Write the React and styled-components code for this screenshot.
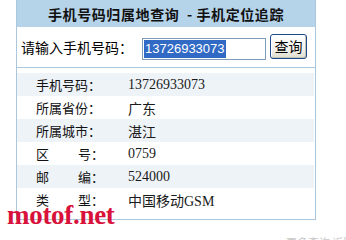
import React from 'react'
import styled, { createGlobalStyle } from 'styled-components'

const GlobalStyle = createGlobalStyle`
  html, body {
    margin: 0;
    padding: 0;
    background: #fff;
    overflow: hidden;
  }
  body {
    font-family: "Noto Sans CJK SC", "Liberation Sans", sans-serif;
    color: #000;
  }
`;

const rows = [
  { label: '手机号码：', value: '13726933073' },
  { label: '所属省份：', value: '广东' },
  { label: '所属城市：', value: '湛江' },
  { first: '区', rest: '号：', value: '0759' },
  { first: '邮', rest: '编：', value: '524000' },
  { first: '类', rest: '型：', value: '中国移动GSM' },
]

const App = () => {
  return (
    <Page>
      <GlobalStyle />
      <Panel>
        <Header>手机号码归属地查询&nbsp; - 手机定位追踪</Header>
        <SearchRow>
          <SearchLabel>请输入手机号码：</SearchLabel>
          <PhoneInput>
            <Selected>13726933073</Selected>
          </PhoneInput>
          <QueryButton>查询</QueryButton>
        </SearchRow>
        <Result>
          {rows.map((r, i) => (
            <Row key={i} $alt={i % 2 === 0}>
              <Label>
                {r.label ? r.label : (
                  <>
                    <span>{r.first}</span>
                    <Spread>{r.rest}</Spread>
                  </>
                )}
              </Label>
              <Value>{r.value}</Value>
            </Row>
          ))}
        </Result>
      </Panel>
      <Watermark>motof.net</Watermark>
      <Footnote>更多查询 返回首页</Footnote>
    </Page>
  )
}

export default App;

const Page = styled.div`
  position: relative;
  width: 346px;
  height: 240px;
  padding-left: 16px;
  box-sizing: border-box;
  overflow: hidden;
`;

const Panel = styled.div`
  width: 300px;
  box-sizing: border-box;
  border: 1px solid #aac7dd;
  border-top: none;
`;

const Header = styled.div`
  height: 27px;
  background: #b5d3e9;
  display: flex;
  align-items: center;
  justify-content: center;
  font-size: 14px;
  font-weight: bold;
  color: #111;
  letter-spacing: 0.6px;
`;

const SearchRow = styled.div`
  height: 41px;
  box-sizing: border-box;
  border-bottom: 1px solid #aac7dd;
  display: flex;
  align-items: center;
  padding-left: 4px;
`;

const SearchLabel = styled.span`
  font-size: 14px;
  width: 117px;
  white-space: nowrap;
`;

const PhoneInput = styled.div`
  width: 124px;
  height: 22px;
  box-sizing: border-box;
  border: 1px solid #7f9db9;
  display: flex;
  align-items: center;
  padding-left: 1px;
  margin-left: 4px;
  margin-top: 3px;
  background: #fff;
`;

const Selected = styled.span`
  background: #316ac5;
  color: #fff;
  font-family: "Liberation Sans", Arial, sans-serif;
  font-size: 13px;
  line-height: 18px;
  padding: 0 1px;
`;

const QueryButton = styled.button`
  width: 37px;
  height: 25px;
  margin-left: 4px;
  margin-top: -2px;
  padding: 0;
  box-sizing: border-box;
  border: 1px solid #1c4b8c;
  border-radius: 3px;
  background: linear-gradient(#ffffff, #f4f3ee 60%, #dedbcd);
  box-shadow: inset -1px -1px 0 #c6c3b4, inset 1px 1px 0 #fff;
  font-family: "Noto Sans CJK SC", sans-serif;
  font-size: 14px;
  line-height: 20px;
  color: #000;
`;

const Result = styled.div`
  padding: 5px 1px 8px 0;
`;

const Row = styled.div`
  height: 23px;
  display: flex;
  align-items: center;
  padding-left: 19px;
  background: ${p => (p.$alt ? '#eef3f8' : '#fff')};
`;

const Label = styled.span`
  width: 92px;
  font-size: 13px;
  white-space: nowrap;
  color: #111;
`;

const Spread = styled.span`
  margin-left: 29px;
`;

const Value = styled.span`
  font-family: "Liberation Serif", "Noto Sans CJK SC", serif;
  font-size: 14px;
  color: #1a1a1a;
`;

const Watermark = styled.div`
  position: absolute;
  left: 7px;
  top: 202px;
  font-family: "Liberation Serif", serif;
  font-weight: bold;
  font-size: 27px;
  line-height: 27px;
  color: #d8123a;
  letter-spacing: -0.3px;
`;

const Footnote = styled.div`
  position: absolute;
  left: 286px;
  top: 236px;
  font-size: 11px;
  line-height: 12px;
  color: #c8c8c8;
  white-space: nowrap;
`;
